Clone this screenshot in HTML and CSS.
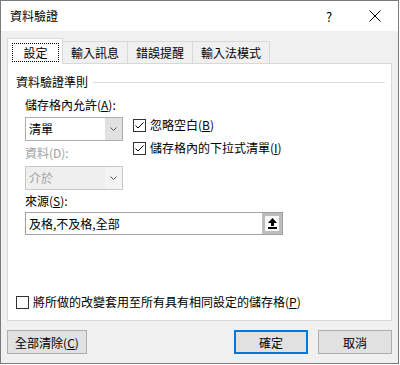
FILE: index.html
```html
<!DOCTYPE html>
<html lang="zh-Hant">
<head>
    <meta charset="UTF-8">
    <title>資料驗證</title>
    <link rel="stylesheet" href="styles.css">
</head>
<body>
    <div class="dialog">
        <div class="titlebar">
            <span class="title">資料驗證</span>
            <span class="tb-btn">?</span>
            <span class="tb-btn">
                <svg width="12" height="12" viewBox="0 0 12 12"><path d="M0.5 0.5 L11.5 11.5 M11.5 0.5 L0.5 11.5" stroke="#000" stroke-width="1" fill="none"/></svg>
            </span>
        </div>

        <div class="tabs">
            <div class="tab active"><span>設定</span></div>
            <div class="tab">輸入訊息</div>
            <div class="tab">錯誤提醒</div>
            <div class="tab">輸入法模式</div>
        </div>

        <div class="panel">
            <div class="group-title"><span>資料驗證準則</span><i class="rule"></i></div>

            <div class="criteria">
                <div class="col">
                    <label class="field-label">儲存格內允許(<u>A</u>):</label>
                    <div class="combo">
                        <span class="combo-text">清單</span>
                        <span class="combo-btn"><svg width="7" height="4" viewBox="0 0 7 4"><polyline points="0.5,0.5 3.5,3.5 6.5,0.5" stroke="#555" fill="none"/></svg></span>
                    </div>
                    <label class="field-label disabled">資料(D):</label>
                    <div class="combo disabled">
                        <span class="combo-text">介於</span>
                        <span class="combo-btn"><svg width="7" height="4" viewBox="0 0 7 4"><polyline points="0.5,0.5 3.5,3.5 6.5,0.5" stroke="#555" fill="none"/></svg></span>
                    </div>
                </div>
                <div class="checks">
                    <label class="check">
                        <span class="box"><svg width="11" height="11" viewBox="0 0 11 11"><polyline points="1.5,5.5 4,8 9.5,2.5" stroke="#000" fill="none"/></svg></span>
                        <span>忽略空白(<u>B</u>)</span>
                    </label>
                    <label class="check">
                        <span class="box"><svg width="11" height="11" viewBox="0 0 11 11"><polyline points="1.5,5.5 4,8 9.5,2.5" stroke="#000" fill="none"/></svg></span>
                        <span>儲存格內的下拉式清單(<u>I</u>)</span>
                    </label>
                </div>
            </div>

            <label class="field-label source-label">來源(<u>S</u>):</label>
            <div class="source">
                <span class="source-text">及格,不及格,全部</span>
                <span class="source-btn">
                    <span class="source-icon"><svg width="9" height="11" viewBox="0 0 9 11"><polygon points="4.5,0 9,5 6,5 6,8 3,8 3,5 0,5" fill="#000"/><rect x="0" y="9" width="9" height="2" fill="#000"/></svg></span>
                </span>
            </div>

            <label class="check apply">
                <span class="box"></span>
                <span>將所做的改變套用至所有具有相同設定的儲存格(<u>P</u>)</span>
            </label>
        </div>

        <div class="buttons">
            <button class="btn clear">全部清除(<u>C</u>)</button>
            <button class="btn default">確定</button>
            <button class="btn">取消</button>
        </div>
    </div>
</body>
</html>
```

FILE: styles.css
```css
* {
    margin: 0;
    padding: 0;
    box-sizing: border-box;
}

body {
    background: #fff;
    font-family: "Noto Sans CJK TC", "Noto Sans", sans-serif;
    font-size: 12px;
    color: #000;
}

.dialog {
    width: 399px;
    height: 364px;
    border: 1px solid #7a7a7a;
    background: #f0f0f0;
}

/* title bar */
.titlebar {
    height: 30px;
    background: #fff;
    display: flex;
    align-items: center;
}

.title {
    flex: 1;
    padding-left: 9px;
    line-height: 16px;
}

.tb-btn {
    width: 46px;
    height: 30px;
    display: flex;
    align-items: center;
    justify-content: center;
    font-size: 13px;
}

/* tabs */
.tabs {
    display: flex;
    align-items: flex-end;
    height: 25px;
    margin: 7px 6px 0;
}

.tab {
    height: 22px;
    line-height: 21px;
    padding: 0 8px;
    border: 1px solid #d9d9d9;
    border-bottom: none;
    margin-left: -1px;
    background: #f0f0f0;
}

.tab.active {
    height: 26px;
    margin: 0 0 -1px 0;
    padding: 4px 3px 2px 4px;
    background: #fff;
    position: relative;
    z-index: 1;
}

.tab.active span {
    display: block;
    width: 47px;
    height: 19px;
    line-height: 17px;
    border: 1px dotted #000;
    text-align: center;
}

/* panel */
.panel {
    height: 258px;
    margin: 0 6px;
    background: #fff;
    border: 1px solid #d9d9d9;
    padding: 11px 6px 10px 8px;
    display: flex;
    flex-direction: column;
}

.group-title {
    display: flex;
    align-items: center;
    line-height: 14px;
}

.group-title .rule {
    flex: 1;
    height: 1px;
    background: #dcdcdc;
    margin-left: 5px;
}

.criteria {
    display: flex;
    margin: 8px 0 0 9px;
}

.col {
    width: 98px;
    display: flex;
    flex-direction: column;
}

.field-label {
    line-height: 16px;
}

.field-label.disabled {
    color: #a0a0a0;
}

.combo {
    height: 24px;
    margin: 4px 0;
    border: 1px solid #adadad;
    background: #fff;
    display: flex;
}

.combo.disabled {
    margin: 5px 0 0;
    border-color: #c8c8c8;
    background: #efefef;
    color: #a0a0a0;
}

.combo-text {
    flex: 1;
    padding-left: 3px;
    line-height: 22px;
}

.combo-btn {
    width: 17px;
    background: #e1e1e1;
    display: flex;
    align-items: center;
    justify-content: center;
}

.combo.disabled .combo-btn {
    background: #f4f4f4;
}

.checks {
    margin-left: 10px;
    padding-top: 20px;
    display: flex;
    flex-direction: column;
    gap: 7px;
}

.check {
    display: flex;
    align-items: center;
    gap: 4px;
    line-height: 16px;
}

.box {
    width: 13px;
    height: 13px;
    border: 1px solid #333;
    background: #fff;
    display: flex;
}

.source-label {
    margin: 3px 0 0 9px;
}

.source {
    width: 258px;
    height: 23px;
    margin: 3px 0 0 9px;
    border: 1px solid #a0a0a0;
    display: flex;
}

.source-text {
    flex: 1;
    padding-left: 3px;
    line-height: 21px;
}

.source-btn {
    width: 20px;
    background: #bcbcbc;
    padding: 3px;
    display: flex;
}

.source-icon {
    flex: 1;
    background: #fafafa;
    display: flex;
    align-items: center;
    justify-content: center;
}

.apply {
    margin-top: auto;
}

/* bottom buttons */
.buttons {
    display: flex;
    gap: 10px;
    margin: 9px 6px 0;
}

.btn {
    width: 74px;
    height: 24px;
    font: inherit;
    color: #000;
    background: #e1e1e1;
    border: 1px solid #adadad;
}

.btn.clear {
    width: 80px;
    margin-right: auto;
}

.btn.default {
    border: 2px solid #0078d7;
}
```
